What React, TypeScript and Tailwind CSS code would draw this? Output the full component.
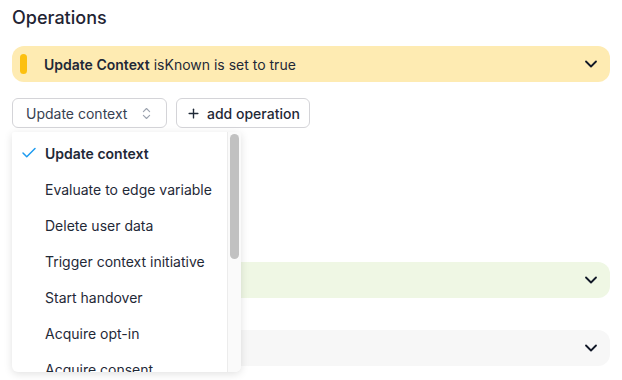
import { Check, ChevronDown, ChevronsUpDown, Plus } from 'lucide-react';

const operations = [
  'Update context',
  'Evaluate to edge variable',
  'Delete user data',
  'Trigger context initiative',
  'Start handover',
  'Acquire opt-in',
  'Acquire consent',
  'Send message',
];

export default function App() {
  return (
    <div
      className="w-[622px] h-[380px] overflow-hidden bg-white px-3 pt-[6px] text-[#1f2937]"
      style={{ fontFamily: 'Inter, "Noto Sans", sans-serif' }}
    >
      <h2 className="text-[18px] font-medium leading-[24px] text-[#1f2433]">Operations</h2>

      {/* Current operation */}
      <div className="mt-[16px] flex h-[36px] items-center rounded-[12px] bg-[#feebb2] pl-2 pr-[9px]">
        <span className="h-[20px] w-[7px] rounded-full bg-[#fcc010]" />
        <p className="ml-[17px] flex-1 text-[14px] text-[#1f2937]">
          <span className="font-semibold">Update Context</span> isKnown is set to true
        </p>
        <ChevronDown className="h-[20px] w-[20px] text-[#111827]" strokeWidth={2.2} />
      </div>

      {/* Select + add */}
      <div className="relative mt-[16px] flex items-center gap-[9px]">
        <button className="flex h-[30px] w-[155px] items-center justify-between rounded-[6px] border border-[#d4d4d8] bg-white pl-[13px] pr-[12px] text-[14px] text-[#374151]">
          Update context
          <ChevronsUpDown className="h-[15px] w-[15px] text-[#9ca3af]" strokeWidth={1.8} />
        </button>
        <button className="flex h-[30px] items-center gap-[6px] rounded-[6px] border border-[#d4d4d8] bg-white pl-[9px] pr-[9px] text-[14px] font-medium text-[#1f2937]">
          <Plus className="h-[15px] w-[15px]" strokeWidth={2.2} />
          add operation
        </button>

        {/* Dropdown menu */}
        <div className="absolute left-0 top-[34px] z-10 flex h-[240px] w-[229px] overflow-hidden rounded-b-[6px] rounded-t-[2px] bg-white shadow-[0_2px_8px_rgba(0,0,0,0.12)]">
          <ul className="flex-1 pt-[3px]">
            {operations.map((op, i) => (
              <li key={op} className="flex h-[36px] items-center text-[14px] text-[#1f2937]">
                <span className="flex w-[33px] justify-start pl-[8px]">
                  {i === 0 && <Check className="h-[18px] w-[18px] text-[#1e9bf0]" strokeWidth={2} />}
                </span>
                <span className={i === 0 ? 'font-semibold' : ''}>{op}</span>
              </li>
            ))}
          </ul>
          <div className="w-[14px] border-l border-[#ececec] bg-[#fafafa] px-[2px] pt-[2px]">
            <div className="h-[125px] w-[9px] rounded-full bg-[#c1c1c1]" />
          </div>
        </div>
      </div>

      {/* Other operations */}
      <div className="mt-[134px] flex h-[36px] items-center justify-end rounded-[12px] bg-[#eff7e4] pr-[9px]">
        <ChevronDown className="h-[20px] w-[20px] text-[#111827]" strokeWidth={2.2} />
      </div>
      <div className="mt-[32px] flex h-[36px] items-center justify-end rounded-[12px] bg-[#f7f7f7] pr-[9px]">
        <ChevronDown className="h-[20px] w-[20px] text-[#111827]" strokeWidth={2.2} />
      </div>
    </div>
  );
}
